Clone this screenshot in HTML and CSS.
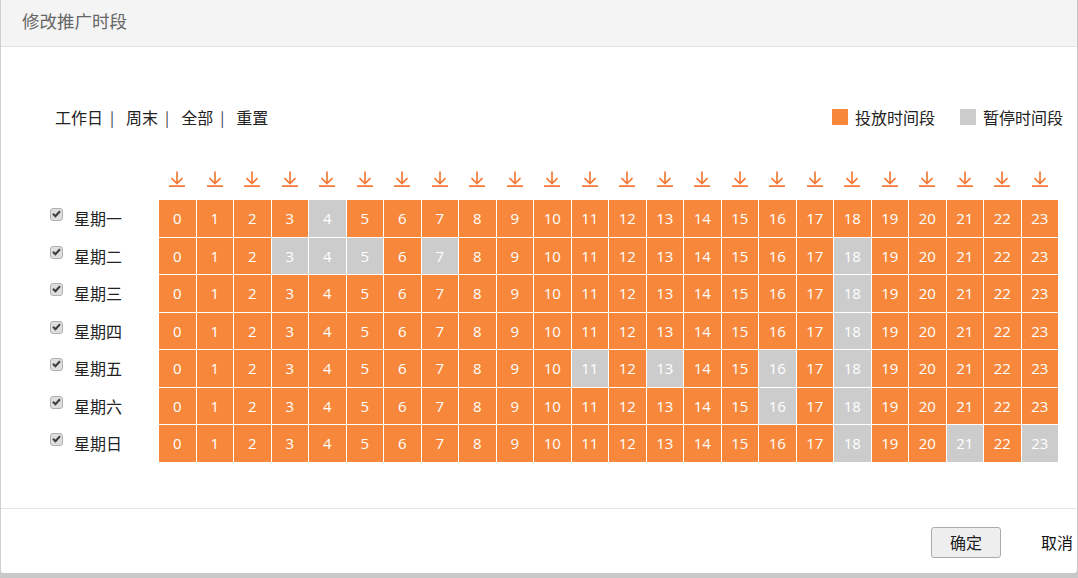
FILE: index.html
```html
<!DOCTYPE html>
<html lang="zh-CN">
<head>
<meta charset="utf-8">
<title>修改推广时段</title>
<link rel="stylesheet" href="styles.css">
</head>
<body>
<div class="dialog">
  <div class="dialog-header">修改推广时段</div>
  <div class="dialog-body">
    <div class="toolbar">
      <div class="quick">
        <a class="qlink">工作日</a><span class="sep">|</span>
        <a class="qlink">周末</a><span class="sep">|</span>
        <a class="qlink">全部</a><span class="sep">|</span>
        <a class="qlink">重置</a>
      </div>
      <div class="legend">
        <span class="swatch on"></span><span class="legend-text">投放时间段</span>
        <span class="swatch off"></span><span class="legend-text">暂停时间段</span>
      </div>
    </div>

    <div class="arrows">
      <span class="arrow"><svg viewBox="0 0 16 16" width="16" height="16"><path d="M8 0.5V12.5M2.5 7.2L8 12.6 13.5 7.2M0 15.1H16"/></svg></span>
      <span class="arrow"><svg viewBox="0 0 16 16" width="16" height="16"><path d="M8 0.5V12.5M2.5 7.2L8 12.6 13.5 7.2M0 15.1H16"/></svg></span>
      <span class="arrow"><svg viewBox="0 0 16 16" width="16" height="16"><path d="M8 0.5V12.5M2.5 7.2L8 12.6 13.5 7.2M0 15.1H16"/></svg></span>
      <span class="arrow"><svg viewBox="0 0 16 16" width="16" height="16"><path d="M8 0.5V12.5M2.5 7.2L8 12.6 13.5 7.2M0 15.1H16"/></svg></span>
      <span class="arrow"><svg viewBox="0 0 16 16" width="16" height="16"><path d="M8 0.5V12.5M2.5 7.2L8 12.6 13.5 7.2M0 15.1H16"/></svg></span>
      <span class="arrow"><svg viewBox="0 0 16 16" width="16" height="16"><path d="M8 0.5V12.5M2.5 7.2L8 12.6 13.5 7.2M0 15.1H16"/></svg></span>
      <span class="arrow"><svg viewBox="0 0 16 16" width="16" height="16"><path d="M8 0.5V12.5M2.5 7.2L8 12.6 13.5 7.2M0 15.1H16"/></svg></span>
      <span class="arrow"><svg viewBox="0 0 16 16" width="16" height="16"><path d="M8 0.5V12.5M2.5 7.2L8 12.6 13.5 7.2M0 15.1H16"/></svg></span>
      <span class="arrow"><svg viewBox="0 0 16 16" width="16" height="16"><path d="M8 0.5V12.5M2.5 7.2L8 12.6 13.5 7.2M0 15.1H16"/></svg></span>
      <span class="arrow"><svg viewBox="0 0 16 16" width="16" height="16"><path d="M8 0.5V12.5M2.5 7.2L8 12.6 13.5 7.2M0 15.1H16"/></svg></span>
      <span class="arrow"><svg viewBox="0 0 16 16" width="16" height="16"><path d="M8 0.5V12.5M2.5 7.2L8 12.6 13.5 7.2M0 15.1H16"/></svg></span>
      <span class="arrow"><svg viewBox="0 0 16 16" width="16" height="16"><path d="M8 0.5V12.5M2.5 7.2L8 12.6 13.5 7.2M0 15.1H16"/></svg></span>
      <span class="arrow"><svg viewBox="0 0 16 16" width="16" height="16"><path d="M8 0.5V12.5M2.5 7.2L8 12.6 13.5 7.2M0 15.1H16"/></svg></span>
      <span class="arrow"><svg viewBox="0 0 16 16" width="16" height="16"><path d="M8 0.5V12.5M2.5 7.2L8 12.6 13.5 7.2M0 15.1H16"/></svg></span>
      <span class="arrow"><svg viewBox="0 0 16 16" width="16" height="16"><path d="M8 0.5V12.5M2.5 7.2L8 12.6 13.5 7.2M0 15.1H16"/></svg></span>
      <span class="arrow"><svg viewBox="0 0 16 16" width="16" height="16"><path d="M8 0.5V12.5M2.5 7.2L8 12.6 13.5 7.2M0 15.1H16"/></svg></span>
      <span class="arrow"><svg viewBox="0 0 16 16" width="16" height="16"><path d="M8 0.5V12.5M2.5 7.2L8 12.6 13.5 7.2M0 15.1H16"/></svg></span>
      <span class="arrow"><svg viewBox="0 0 16 16" width="16" height="16"><path d="M8 0.5V12.5M2.5 7.2L8 12.6 13.5 7.2M0 15.1H16"/></svg></span>
      <span class="arrow"><svg viewBox="0 0 16 16" width="16" height="16"><path d="M8 0.5V12.5M2.5 7.2L8 12.6 13.5 7.2M0 15.1H16"/></svg></span>
      <span class="arrow"><svg viewBox="0 0 16 16" width="16" height="16"><path d="M8 0.5V12.5M2.5 7.2L8 12.6 13.5 7.2M0 15.1H16"/></svg></span>
      <span class="arrow"><svg viewBox="0 0 16 16" width="16" height="16"><path d="M8 0.5V12.5M2.5 7.2L8 12.6 13.5 7.2M0 15.1H16"/></svg></span>
      <span class="arrow"><svg viewBox="0 0 16 16" width="16" height="16"><path d="M8 0.5V12.5M2.5 7.2L8 12.6 13.5 7.2M0 15.1H16"/></svg></span>
      <span class="arrow"><svg viewBox="0 0 16 16" width="16" height="16"><path d="M8 0.5V12.5M2.5 7.2L8 12.6 13.5 7.2M0 15.1H16"/></svg></span>
      <span class="arrow"><svg viewBox="0 0 16 16" width="16" height="16"><path d="M8 0.5V12.5M2.5 7.2L8 12.6 13.5 7.2M0 15.1H16"/></svg></span>
    </div>

    <div class="schedule">
      <div class="day"><span class="cb"><svg viewBox="0 0 13 13" width="13" height="13"><rect x="0.5" y="0.5" width="12" height="12" rx="2.5" class="cb-box"/><path d="M3 5.8L5.4 8.2 10 3.2" class="cb-check"/></svg></span><span class="day-name">星期一</span></div>
      <div class="cell">0</div><div class="cell">1</div><div class="cell">2</div><div class="cell">3</div><div class="cell off">4</div><div class="cell">5</div><div class="cell">6</div><div class="cell">7</div><div class="cell">8</div><div class="cell">9</div><div class="cell">10</div><div class="cell">11</div><div class="cell">12</div><div class="cell">13</div><div class="cell">14</div><div class="cell">15</div><div class="cell">16</div><div class="cell">17</div><div class="cell">18</div><div class="cell">19</div><div class="cell">20</div><div class="cell">21</div><div class="cell">22</div><div class="cell">23</div>

      <div class="day"><span class="cb"><svg viewBox="0 0 13 13" width="13" height="13"><rect x="0.5" y="0.5" width="12" height="12" rx="2.5" class="cb-box"/><path d="M3 5.8L5.4 8.2 10 3.2" class="cb-check"/></svg></span><span class="day-name">星期二</span></div>
      <div class="cell">0</div><div class="cell">1</div><div class="cell">2</div><div class="cell off">3</div><div class="cell off">4</div><div class="cell off">5</div><div class="cell">6</div><div class="cell off">7</div><div class="cell">8</div><div class="cell">9</div><div class="cell">10</div><div class="cell">11</div><div class="cell">12</div><div class="cell">13</div><div class="cell">14</div><div class="cell">15</div><div class="cell">16</div><div class="cell">17</div><div class="cell off">18</div><div class="cell">19</div><div class="cell">20</div><div class="cell">21</div><div class="cell">22</div><div class="cell">23</div>

      <div class="day"><span class="cb"><svg viewBox="0 0 13 13" width="13" height="13"><rect x="0.5" y="0.5" width="12" height="12" rx="2.5" class="cb-box"/><path d="M3 5.8L5.4 8.2 10 3.2" class="cb-check"/></svg></span><span class="day-name">星期三</span></div>
      <div class="cell">0</div><div class="cell">1</div><div class="cell">2</div><div class="cell">3</div><div class="cell">4</div><div class="cell">5</div><div class="cell">6</div><div class="cell">7</div><div class="cell">8</div><div class="cell">9</div><div class="cell">10</div><div class="cell">11</div><div class="cell">12</div><div class="cell">13</div><div class="cell">14</div><div class="cell">15</div><div class="cell">16</div><div class="cell">17</div><div class="cell off">18</div><div class="cell">19</div><div class="cell">20</div><div class="cell">21</div><div class="cell">22</div><div class="cell">23</div>

      <div class="day"><span class="cb"><svg viewBox="0 0 13 13" width="13" height="13"><rect x="0.5" y="0.5" width="12" height="12" rx="2.5" class="cb-box"/><path d="M3 5.8L5.4 8.2 10 3.2" class="cb-check"/></svg></span><span class="day-name">星期四</span></div>
      <div class="cell">0</div><div class="cell">1</div><div class="cell">2</div><div class="cell">3</div><div class="cell">4</div><div class="cell">5</div><div class="cell">6</div><div class="cell">7</div><div class="cell">8</div><div class="cell">9</div><div class="cell">10</div><div class="cell">11</div><div class="cell">12</div><div class="cell">13</div><div class="cell">14</div><div class="cell">15</div><div class="cell">16</div><div class="cell">17</div><div class="cell off">18</div><div class="cell">19</div><div class="cell">20</div><div class="cell">21</div><div class="cell">22</div><div class="cell">23</div>

      <div class="day"><span class="cb"><svg viewBox="0 0 13 13" width="13" height="13"><rect x="0.5" y="0.5" width="12" height="12" rx="2.5" class="cb-box"/><path d="M3 5.8L5.4 8.2 10 3.2" class="cb-check"/></svg></span><span class="day-name">星期五</span></div>
      <div class="cell">0</div><div class="cell">1</div><div class="cell">2</div><div class="cell">3</div><div class="cell">4</div><div class="cell">5</div><div class="cell">6</div><div class="cell">7</div><div class="cell">8</div><div class="cell">9</div><div class="cell">10</div><div class="cell off">11</div><div class="cell">12</div><div class="cell off">13</div><div class="cell">14</div><div class="cell">15</div><div class="cell off">16</div><div class="cell">17</div><div class="cell off">18</div><div class="cell">19</div><div class="cell">20</div><div class="cell">21</div><div class="cell">22</div><div class="cell">23</div>

      <div class="day"><span class="cb"><svg viewBox="0 0 13 13" width="13" height="13"><rect x="0.5" y="0.5" width="12" height="12" rx="2.5" class="cb-box"/><path d="M3 5.8L5.4 8.2 10 3.2" class="cb-check"/></svg></span><span class="day-name">星期六</span></div>
      <div class="cell">0</div><div class="cell">1</div><div class="cell">2</div><div class="cell">3</div><div class="cell">4</div><div class="cell">5</div><div class="cell">6</div><div class="cell">7</div><div class="cell">8</div><div class="cell">9</div><div class="cell">10</div><div class="cell">11</div><div class="cell">12</div><div class="cell">13</div><div class="cell">14</div><div class="cell">15</div><div class="cell off">16</div><div class="cell">17</div><div class="cell off">18</div><div class="cell">19</div><div class="cell">20</div><div class="cell">21</div><div class="cell">22</div><div class="cell">23</div>

      <div class="day"><span class="cb"><svg viewBox="0 0 13 13" width="13" height="13"><rect x="0.5" y="0.5" width="12" height="12" rx="2.5" class="cb-box"/><path d="M3 5.8L5.4 8.2 10 3.2" class="cb-check"/></svg></span><span class="day-name">星期日</span></div>
      <div class="cell">0</div><div class="cell">1</div><div class="cell">2</div><div class="cell">3</div><div class="cell">4</div><div class="cell">5</div><div class="cell">6</div><div class="cell">7</div><div class="cell">8</div><div class="cell">9</div><div class="cell">10</div><div class="cell">11</div><div class="cell">12</div><div class="cell">13</div><div class="cell">14</div><div class="cell">15</div><div class="cell">16</div><div class="cell">17</div><div class="cell off">18</div><div class="cell">19</div><div class="cell">20</div><div class="cell off">21</div><div class="cell">22</div><div class="cell off">23</div>
    </div>
  </div>
  <div class="dialog-footer">
    <button class="btn-ok" type="button">确定</button>
    <a class="btn-cancel">取消</a>
  </div>
</div>
</body>
</html>
```

FILE: styles.css
```css
html, body {
  margin: 0;
  padding: 0;
}
body {
  background: #c8c8c8;
  height: 578px;
  overflow: hidden;
  font-family: "Microsoft YaHei", "Noto Sans CJK SC", "Noto Sans", sans-serif;
  color: #222;
}
.dialog {
  width: 1077px;
  height: 573px;
  background: #fff;
  border-left: 1px solid #cfcfcf;
  border-radius: 0 0 3px 3px;
  display: flex;
  flex-direction: column;
  box-sizing: border-box;
}
.dialog-header {
  height: 46px;
  background: #f4f4f4;
  border-bottom: 1px solid #e2e2e2;
  padding-left: 21px;
  font-size: 17.5px;
  line-height: 42px;
  color: #666;
}
.dialog-body {
  padding: 58px 0 0 0;
  height: 462px;
  box-sizing: border-box;
  border-bottom: 1px solid #e5e5e5;
}
.toolbar {
  display: flex;
  justify-content: space-between;
  align-items: center;
  height: 24px;
  padding: 0 14px 0 54px;
}
.quick {
  display: flex;
  align-items: center;
  font-size: 16px;
  color: #222;
}
.qlink {
  cursor: pointer;
}
.sep {
  color: #334;
  margin: 0 12px 0 7px;
  font-size: 15px;
}
.legend {
  display: flex;
  align-items: center;
  font-size: 16px;
}
.swatch {
  width: 16px;
  height: 16px;
  display: inline-block;
  margin-right: 7px;
}
.swatch.on {
  background: #f7883b;
}
.swatch.off {
  background: #cccccc;
  margin-left: 25px;
}
.arrows {
  margin: 42px 0 0 158px;
  width: 899px;
  display: grid;
  grid-template-columns: repeat(24, 1fr);
  column-gap: 1px;
  height: 16px;
}
.arrow {
  display: flex;
  justify-content: center;
}
.arrow svg {
  display: block;
}
.arrow path {
  fill: none;
  stroke: #f47a3a;
  stroke-width: 1.7;
}
.schedule {
  margin: 13px 0 0 48px;
  display: grid;
  grid-template-columns: 109px repeat(24, 36.5px);
  grid-auto-rows: 36.5px;
  gap: 1px;
}
.day {
  display: flex;
  align-items: center;
  font-size: 16px;
}
.cb {
  width: 13px;
  height: 13px;
  margin: 0 11px 7px 1px;
  display: block;
}
.cb svg {
  display: block;
}
.cb-box {
  fill: #dedede;
  stroke: #b0b0b0;
  stroke-width: 1;
}
.cb-check {
  fill: none;
  stroke: #3e3e3e;
  stroke-width: 2.1;
}
.cell {
  background: #f7883b;
  color: #fff;
  display: flex;
  align-items: center;
  justify-content: center;
  font-size: 15px;
  font-family: "Open Sans", "Noto Sans", sans-serif;
}
.cell.off {
  background: #cccccc;
}
.dialog-footer {
  flex: 1;
  display: flex;
  align-items: center;
  justify-content: flex-end;
  padding-right: 4px;
}
.btn-ok {
  width: 70px;
  height: 31px;
  margin-top: 2px;
  background: #eeeeee;
  border: 1px solid #ababab;
  border-radius: 3px;
  font-family: inherit;
  font-size: 16px;
  color: #222;
  padding: 0;
}
.btn-cancel {
  margin-left: 40px;
  margin-top: 2px;
  font-size: 16px;
  color: #111;
  cursor: pointer;
}
```
